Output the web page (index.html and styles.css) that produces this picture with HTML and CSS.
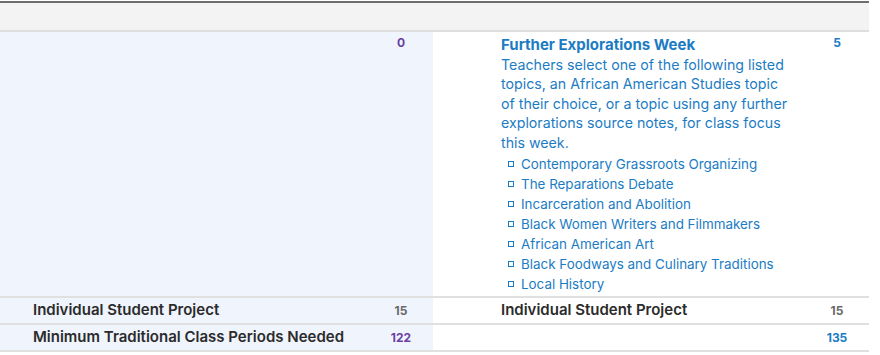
FILE: index.html
```html
<!DOCTYPE html>
<html>
<head>
<meta charset="utf-8">
<link rel="stylesheet" href="styles.css">
</head>
<body>
<div class="table">
  <div class="head"></div>
  <div class="row main">
    <div class="cell label left-bg"></div>
    <div class="cell num left-bg purple">0</div>
    <div class="cell label right-label">
      <div class="title">Further Explorations Week</div>
      <p class="desc">Teachers select one of the following listed topics, an African American Studies topic of their choice, or a topic using any further explorations source notes, for class focus this week.</p>
      <ul class="topics">
        <li>Contemporary Grassroots Organizing</li>
        <li>The Reparations Debate</li>
        <li>Incarceration and Abolition</li>
        <li>Black Women Writers and Filmmakers</li>
        <li>African American Art</li>
        <li>Black Foodways and Culinary Traditions</li>
        <li>Local History</li>
      </ul>
    </div>
    <div class="cell num blue">5</div>
  </div>
  <div class="row small">
    <div class="cell label left-bg left-label strong">Individual Student Project</div>
    <div class="cell num left-bg gray">15</div>
    <div class="cell label right-label strong">Individual Student Project</div>
    <div class="cell num gray">15</div>
  </div>
  <div class="row small">
    <div class="cell label left-bg left-label strong">Minimum Traditional Class Periods Needed</div>
    <div class="cell num left-bg purple">122</div>
    <div class="cell label right-label"></div>
    <div class="cell num blue">135</div>
  </div>
</div>
</body>
</html>
```

FILE: styles.css
```css
html, body {
  margin: 0;
  padding: 0;
  background: #ffffff;
}
body {
  font-family: Inter, "Noto Sans", sans-serif;
}
.table {
  width: 869px;
  border-top: 2px solid #6e6e6e;
  margin-top: 1px;
}
.head {
  height: 27px;
  background: #f3f3f3;
  border-bottom: 2px solid #dedede;
}
.row {
  display: grid;
  grid-template-columns: 369px 64px 372px 64px;
  border-bottom: 2px solid #e0e0e0;
}
.left-bg {
  background: #eff4fd;
}
.cell {
  box-sizing: border-box;
}
.num {
  text-align: center;
  font-size: 12px;
  font-weight: 700;
}
.main .num {
  padding-top: 3px;
}
.small .cell {
  height: 25px;
  display: flex;
  align-items: center;
}
.small .num {
  justify-content: center;
}
.purple { color: #6b3fa1; }
.blue { color: #1b7cc4; }
.gray { color: #6a6a6a; }
.left-label {
  padding-left: 33px;
}
.right-label {
  padding-left: 68px;
  padding-right: 12px;
}
.strong {
  font-size: 15px;
  font-weight: 600;
  color: #2b2b2b;
  padding-bottom: 3px;
}
.main .right-label {
  padding-top: 3px;
  padding-bottom: 2px;
  color: #1b7cc4;
}
.title {
  font-size: 15px;
  font-weight: 700;
  line-height: 20px;
}
.desc {
  margin: 0;
  font-size: 14.2px;
  line-height: 19.4px;
}
.topics {
  list-style: none;
  margin: 2px 0 0;
  padding: 0 0 0 7px;
  font-size: 13.4px;
  line-height: 20px;
}
.topics li {
  display: flex;
  align-items: center;
  gap: 7px;
}
.topics li::before {
  content: "";
  width: 4px;
  height: 4px;
  border: 1.5px solid #1b7cc4;
  flex: none;
}
```
